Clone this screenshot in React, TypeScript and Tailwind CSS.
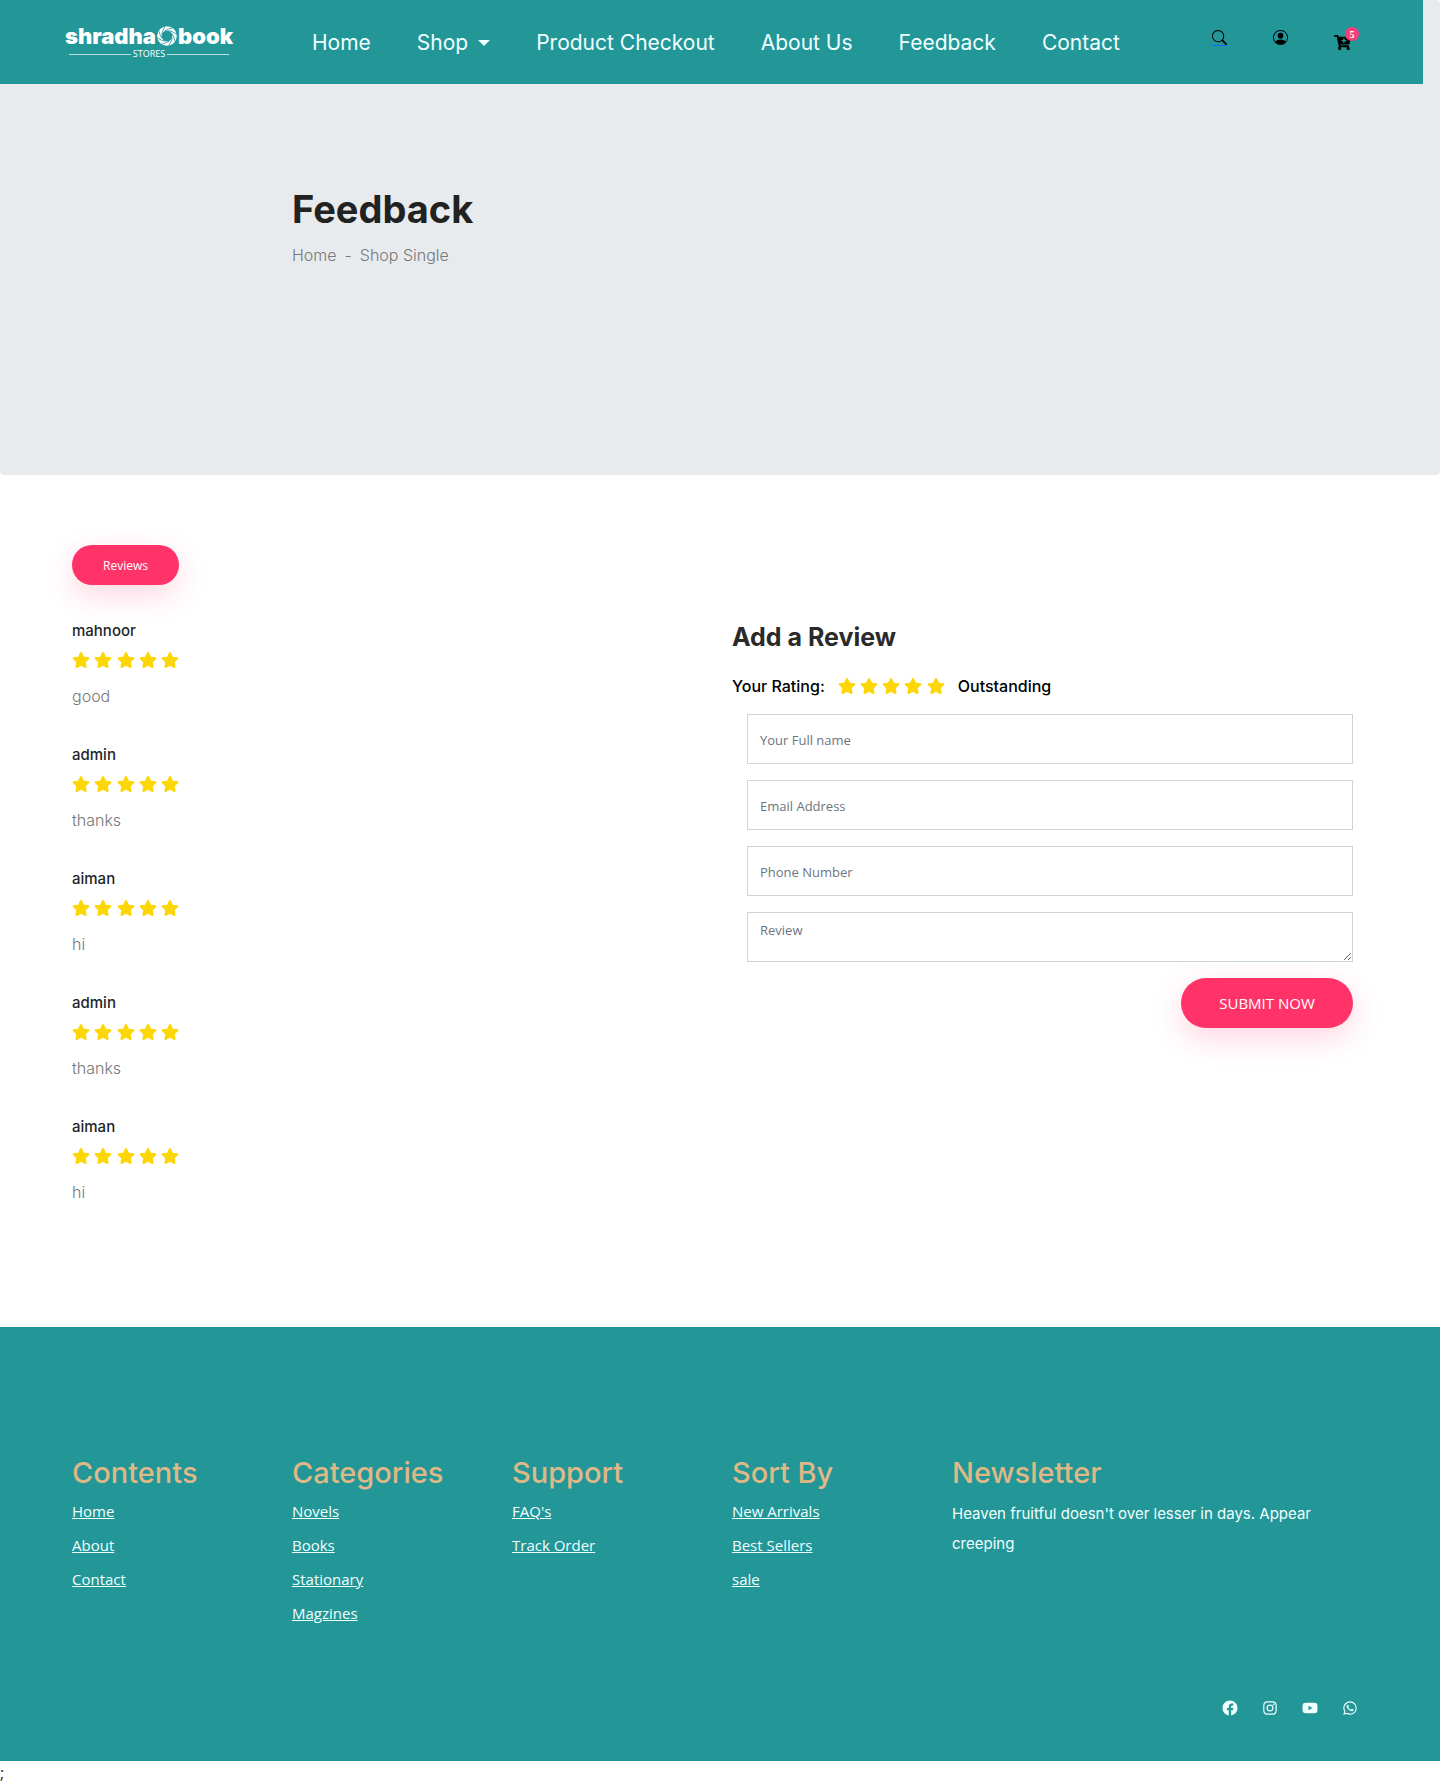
import React, { useState } from "react";
import { BsSearch, BsPersonCircle } from "react-icons/bs";
import { FaCartPlus, FaStar } from "react-icons/fa";
import { BiLogoFacebookCircle, BiLogoInstagram, BiLogoYoutube, BiLogoWhatsapp } from "react-icons/bi";

const navLinks = [
  { label: "Home" },
  { label: "Shop", menu: true },
  { label: "Product Checkout" },
  { label: "About Us" },
  { label: "Feedback" },
  { label: "Contact" },
];

const reviews = [
  { name: "mahnoor", text: "good" },
  { name: "admin", text: "thanks" },
  { name: "aiman", text: "hi" },
  { name: "admin", text: "thanks" },
  { name: "aiman", text: "hi" },
];

const footerColumns = [
  { title: "Contents", links: ["Home", "About", "Contact"] },
  { title: "Categories", links: ["Novels", "Books", "Stationary", "Magzines"] },
  { title: "Support", links: ["FAQ's", "Track Order"] },
  { title: "Sort By", links: ["New Arrivals", "Best Sellers", "sale"] },
];

const socials = [
  { label: "Facebook", Icon: BiLogoFacebookCircle },
  { label: "Instagram", Icon: BiLogoInstagram },
  { label: "YouTube", Icon: BiLogoYoutube },
  { label: "WhatsApp", Icon: BiLogoWhatsapp },
];

const bladeAngles = [0, 45, 90, 135, 180, 225, 270, 315];

function Logo() {
  return (
    <a href="#" aria-label="Shradha book stores" className="flex w-[168px] flex-col text-white">
      <span className="flex items-center justify-between text-[22px] leading-5 font-black">
        <span>shradha</span>
        <svg viewBox="0 0 20 20" className="size-5 shrink-0" fill="none" stroke="currentColor" aria-hidden="true">
          <circle cx="10" cy="10" r="7.6" strokeWidth="4.4" />
          {bladeAngles.map((a) => (
            <path key={a} d="M7.5 5 Q11 2.8 15.5 1.8" stroke="#239698" strokeWidth="0.8" transform={`rotate(${a} 10 10)`} />
          ))}
        </svg>
        <span>book</span>
      </span>
      <span className="mt-0.5 flex items-center gap-0.5 px-1 font-['Open_Sans'] text-[9px] leading-3">
        <span className="h-px flex-1 bg-white/70" />
        STORES
        <span className="h-px flex-1 bg-white/70" />
      </span>
    </a>
  );
}

function Stars() {
  return (
    <span role="img" aria-label="5 out of 5 stars" className="flex w-[107px] justify-between text-[#fdd705]">
      {[1, 2, 3, 4, 5].map((n) => (
        <FaStar key={n} className="h-4 w-[18px]" />
      ))}
    </span>
  );
}

function Header() {
  return (
    <header className="mr-[17px] flex h-[84px] bg-[#239698] pl-[65px]">
      <div className="pt-[26px]">
        <Logo />
      </div>
      <nav className="ml-[79px] flex items-center gap-[46px] pt-0.5 text-[21px] text-[#f0ffff]">
        {navLinks.map((l) => (
          <a key={l.label} href="#" className="flex items-center whitespace-nowrap">
            {l.label}
            {l.menu && (
              <span className="ml-2.5 border-x-[6px] border-t-[6px] border-x-transparent border-t-current" />
            )}
          </a>
        ))}
      </nav>
      <div className="mr-[73px] ml-auto flex gap-[46px] pt-[30px] text-black">
        <button type="button" aria-label="Search" className="flex h-4 border-b border-[#0d6efd]">
          <BsSearch className="size-[15px]" />
        </button>
        <button type="button" aria-label="Account" className="flex h-4">
          <BsPersonCircle className="size-[15px]" />
        </button>
        <a href="#" aria-label="Cart, 5 items" className="relative mt-1 h-4 w-4">
          <FaCartPlus className="size-[17px]" />
          <span className="absolute -top-[7px] left-[11px] flex size-3.5 items-center justify-center rounded-full bg-[#f63e7b] font-['Liberation_Serif'] text-[10px] font-bold text-white">
            5
          </span>
        </a>
      </div>
    </header>
  );
}

function ReviewForm() {
  const [form, setForm] = useState({ name: "", email: "", phone: "", review: "" });
  const set = (k: keyof typeof form) => (e: React.ChangeEvent<HTMLInputElement | HTMLTextAreaElement>) =>
    setForm({ ...form, [k]: e.target.value });
  return (
    <form
      onSubmit={(e) => e.preventDefault()}
      className="mt-4 flex flex-col gap-4 px-[15px] font-['Open_Sans'] text-[13px] text-gray-700"
    >
      <input
        aria-label="Your Full name"
        placeholder="Your Full name"
        value={form.name}
        onChange={set("name")}
        className="h-[50px] border border-[#ced4da] px-3 pt-0.5 placeholder:text-[#6c757d]"
      />
      <input
        type="email"
        aria-label="Email Address"
        placeholder="Email Address"
        value={form.email}
        onChange={set("email")}
        className="h-[50px] border border-[#ced4da] px-3 pt-0.5 placeholder:text-[#6c757d]"
      />
      <input
        type="tel"
        aria-label="Phone Number"
        placeholder="Phone Number"
        value={form.phone}
        onChange={set("phone")}
        className="h-[50px] border border-[#ced4da] px-3 pt-0.5 placeholder:text-[#6c757d]"
      />
      <textarea
        aria-label="Review"
        placeholder="Review"
        value={form.review}
        onChange={set("review")}
        className="h-[50px] border border-[#ced4da] px-3 py-2 placeholder:text-[#6c757d]"
      />
      <button
        type="submit"
        className="h-[50px] w-[172px] self-end rounded-full bg-[#ff3368] text-[15px] text-white shadow-[0_10px_30px_rgba(255,51,104,0.2)]"
      >
        SUBMIT NOW
      </button>
    </form>
  );
}

export default function App() {
  return (
    <div className="bg-white font-[Inter,sans-serif] text-[#212529]">
      <section className="h-[475px] rounded bg-[#e8ebee]">
        <Header />
        <div className="mx-auto grid max-w-[1320px] grid-cols-6 pt-[102px]">
          <div className="col-span-4 col-start-2 px-3">
            <h1 className="text-[38px] leading-[46px] font-bold text-[#222]">Feedback</h1>
            <p className="mt-[11px] flex gap-2 text-base leading-6 font-light text-[#777]">
              <a href="#">Home</a>
              <span>-</span>
              <a href="#">Shop Single</a>
            </p>
          </div>
        </div>
      </section>

      <main className="mx-auto grid max-w-[1320px] grid-cols-2 pt-[70px] pb-[122px]">
        <section className="px-3">
          <button
            type="button"
            className="h-10 w-[107px] rounded-full bg-[#ff3368] pt-0.5 font-['Open_Sans'] text-xs text-white shadow-[0_10px_30px_rgba(255,51,104,0.2)]"
          >
            Reviews
          </button>
          <ul className="mt-9 flex flex-col gap-9">
            {reviews.map((r, i) => (
              <li key={i} className="flex h-[88px] flex-col">
                <h4 className="text-[15px] leading-5 font-medium">{r.name}</h4>
                <div className="mt-[11px]">
                  <Stars />
                </div>
                <p className="mt-4 text-base leading-6 font-light text-[#777]">{r.text}</p>
              </li>
            ))}
          </ul>
        </section>

        <section className="px-3 pt-[77px]">
          <h2 className="text-[25px] leading-[30px] font-bold text-[#2a2a2a]">Add a Review</h2>
          <div className="mt-[22px] flex items-center gap-[13px] text-base leading-6 font-medium text-black">
            <span>Your Rating:</span>
            <Stars />
            <span>Outstanding</span>
          </div>
          <ReviewForm />
        </section>
      </main>

      <footer className="bg-[#239698] pt-[129px] pb-[44px] text-[#f0ffff]">
        <div className="mx-auto grid max-w-[1320px] grid-cols-6">
          {footerColumns.map((c) => (
            <div key={c.title} className="px-3">
              <h3 className="text-[29px] leading-[34px] font-medium text-[#deb887]">{c.title}</h3>
              <ul className="mt-1 font-['Open_Sans'] text-[15px] leading-[34px]">
                {c.links.map((l) => (
                  <li key={l}>
                    <a href="#" className="underline">
                      {l}
                    </a>
                  </li>
                ))}
              </ul>
            </div>
          ))}
          <div className="col-span-2 px-3">
            <h3 className="text-[29px] leading-[34px] font-medium text-[#deb887]">Newsletter</h3>
            <p className="mt-[9px] text-[15px] leading-[30px]">
              Heaven fruitful doesn't over lesser in days. Appear creeping
            </p>
          </div>
        </div>
        <div className="mx-auto mt-[69px] flex max-w-[1320px] justify-end gap-[22px] pr-[21px]">
          {socials.map(({ label, Icon }) => (
            <a key={label} href="#" aria-label={label}>
              <Icon className="size-[18px]" />
            </a>
          ))}
        </div>
      </footer>
      <p className="font-['Open_Sans'] text-base leading-6">;</p>
    </div>
  );
}
